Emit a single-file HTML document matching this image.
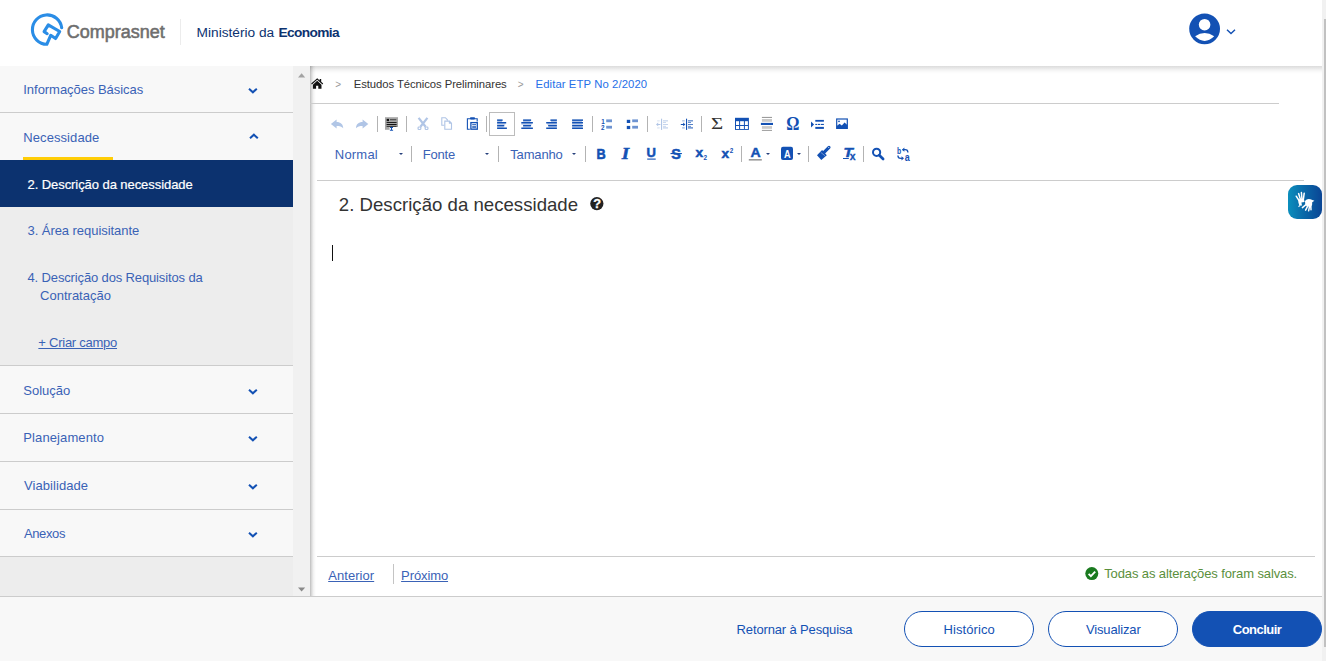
<!DOCTYPE html>
<html lang="pt-BR">
<head>
<meta charset="utf-8">
<title>Editar ETP No 2/2020 - Comprasnet</title>
<style>
html,body{margin:0;padding:0;}
body{width:1326px;height:661px;overflow:hidden;background:#fff;position:relative;font-family:"Liberation Sans",sans-serif;}
.abs{position:absolute;}
.t{position:absolute;white-space:pre;line-height:20px;font-family:"Liberation Sans",sans-serif;}
#lg{left:66.70px;top:22.03px;font-size:18px;font-weight:normal;color:#6e6e6e;letter-spacing:0.000px;-webkit-text-stroke:0.55px #6e6e6e;}
#mi1{left:196.60px;top:22.53px;font-size:13.7px;font-weight:normal;color:#0c326f;letter-spacing:0.000px;}
#mi2{left:278.44px;top:22.53px;font-size:13.7px;font-weight:bold;color:#0c326f;letter-spacing:-0.620px;}
#s1{left:23.30px;top:79.53px;font-size:13px;font-weight:normal;color:#3a62b6;letter-spacing:-0.039px;}
#s2{left:23.30px;top:127.53px;font-size:13px;font-weight:normal;color:#3a62b6;letter-spacing:0.077px;}
#s3{left:27.50px;top:174.53px;font-size:13px;font-weight:normal;color:#ffffff;letter-spacing:-0.067px;-webkit-text-stroke:0.2px #fff;}
#s4{left:27.50px;top:220.53px;font-size:13px;font-weight:normal;color:#3a62b6;letter-spacing:-0.055px;}
#s5{left:27.50px;top:267.53px;font-size:13px;font-weight:normal;color:#3a62b6;letter-spacing:-0.138px;}
#s6{left:40.10px;top:285.53px;font-size:13px;font-weight:normal;color:#3a62b6;letter-spacing:0.000px;}
#s7{left:38.36px;top:332.53px;font-size:13px;font-weight:normal;color:#3a62b6;letter-spacing:-0.257px;text-decoration:underline;}
#s8{left:23.30px;top:380.53px;font-size:13px;font-weight:normal;color:#3a62b6;letter-spacing:0.000px;}
#s9{left:23.30px;top:427.53px;font-size:13px;font-weight:normal;color:#3a62b6;letter-spacing:0.102px;}
#s10{left:24.00px;top:475.53px;font-size:13px;font-weight:normal;color:#3a62b6;letter-spacing:0.070px;}
#s11{left:24.00px;top:523.53px;font-size:13px;font-weight:normal;color:#3a62b6;letter-spacing:-0.392px;}
#b1{left:335.30px;top:74.53px;font-size:10px;font-weight:normal;color:#999;letter-spacing:0.000px;}
#b2{left:353.70px;top:74.03px;font-size:11.3px;font-weight:normal;color:#333;letter-spacing:-0.065px;}
#b3{left:517.80px;top:74.53px;font-size:10px;font-weight:normal;color:#999;letter-spacing:0.000px;}
#b4{left:535.56px;top:74.03px;font-size:11.3px;font-weight:normal;color:#2670e8;letter-spacing:0.096px;}
#c1{left:334.81px;top:144.53px;font-size:13px;font-weight:normal;color:#3a62b6;letter-spacing:0.210px;}
#c2{left:422.80px;top:144.53px;font-size:13px;font-weight:normal;color:#3a62b6;letter-spacing:-0.193px;}
#c3{left:510.20px;top:144.53px;font-size:13px;font-weight:normal;color:#3a62b6;letter-spacing:-0.140px;}
#ti{left:338.81px;top:194.53px;font-size:18.6px;font-weight:normal;color:#333;letter-spacing:0.019px;}
#n1{left:328.20px;top:565.53px;font-size:13px;font-weight:normal;color:#3a62b6;letter-spacing:0.060px;text-decoration:underline;}
#n2{left:401.10px;top:565.53px;font-size:13px;font-weight:normal;color:#3a62b6;letter-spacing:-0.105px;text-decoration:underline;}
#st{left:1104.20px;top:563.53px;font-size:13px;font-weight:normal;color:#5a8f3c;letter-spacing:-0.109px;}
#f1{left:736.60px;top:619.53px;font-size:13px;font-weight:normal;color:#1351b4;letter-spacing:-0.144px;}
#f2{left:943.47px;top:619.53px;font-size:13px;font-weight:normal;color:#1351b4;letter-spacing:0.087px;}
#f3{left:1085.90px;top:619.53px;font-size:13px;font-weight:normal;color:#1351b4;letter-spacing:-0.140px;}
#f4{left:1232.80px;top:619.53px;font-size:13px;font-weight:bold;color:#ffffff;letter-spacing:-0.520px;}
/* layout blocks */
#header{left:0;top:0;width:1322px;height:66px;background:#fff;}
#hdiv{left:180px;top:19px;width:1px;height:26px;background:#ececec;}
#side{left:0;top:66px;width:293px;height:530px;background:#f8f8f8;}
.sb{position:absolute;left:0;width:293px;height:1px;background:#cccccc;}
#items{left:0;top:207px;width:293px;height:158px;background:#ededed;}
#active{left:0;top:160px;width:293px;height:47px;background:#0c326f;}
#yellow{left:23px;top:157px;width:90px;height:3px;background:#ffcd07;}
#filler{left:0;top:557px;width:293px;height:39px;background:#ededed;}
#sscroll{left:293px;top:66px;width:17px;height:530px;background:#f1f1f1;}
#main{left:310px;top:66px;width:1012px;height:530px;background:#fff;}
#shtop{left:310px;top:66px;width:1012px;height:8px;background:linear-gradient(to bottom,rgba(0,0,0,.137) 0,rgba(0,0,0,.098) 25%,rgba(0,0,0,.047) 50%,rgba(0,0,0,.016) 75%,rgba(0,0,0,0) 100%);}
#shleft{left:310px;top:66px;width:6px;height:530px;background:linear-gradient(to right,rgba(0,0,0,.224) 0,rgba(0,0,0,.224) 8%,rgba(0,0,0,.153) 25%,rgba(0,0,0,.098) 42%,rgba(0,0,0,.051) 58%,rgba(0,0,0,.027) 75%,rgba(0,0,0,.008) 92%,rgba(0,0,0,0) 100%);}
.hr{position:absolute;height:1px;background:#cccccc;}
#footer{left:0;top:596px;width:1322px;height:65px;background:#f8f8f8;border-top:1px solid #cccccc;box-sizing:border-box;}
.btn{position:absolute;top:611px;width:130px;height:36px;border-radius:18px;box-sizing:border-box;border:1px solid #1351b4;background:#fff;}
#bt3{background:#1351b4;}
#rtrack{left:1322px;top:0;width:4px;height:661px;background:#f1f1f1;}
#rthumb{left:1324px;top:19px;width:2px;height:628px;background:#c1c1c1;}
.sep{position:absolute;width:1px;height:16px;background:#b3b3b3;}
.ic{position:absolute;width:16px;height:16px;overflow:visible;}
.dis{opacity:.33;}
#albox{left:489px;top:112px;width:26px;height:24px;box-sizing:border-box;border:1px solid #bcbcbc;background:#fff;}
.arr{position:absolute;width:0;height:0;border-left:2.5px solid transparent;border-right:2.5px solid transparent;border-top:2.5px solid #27407c;}
#cursor{left:332px;top:245px;width:1px;height:16px;background:#111;}
#vlibras{left:1288px;top:185px;width:34px;height:34px;border-radius:9px;background:linear-gradient(to right,#0b8fbd 0,#0a6aa9 45%,#0a4595 100%);}
.g{position:absolute;white-space:pre;font-family:"Liberation Sans",sans-serif;color:#1351b4;line-height:16px;}
</style>
</head>
<body>
<div class="abs" id="header"></div>
<div class="abs" id="hdiv"></div>
<div class="abs" id="side"></div>
<div class="abs" id="items"></div>
<div class="abs" id="filler"></div>
<div class="abs" id="active"></div>
<div class="abs" id="yellow"></div>
<div class="sb" style="top:112px"></div>
<div class="sb" style="top:365px"></div>
<div class="sb" style="top:413px"></div>
<div class="sb" style="top:461px"></div>
<div class="sb" style="top:509px"></div>
<div class="sb" style="top:556px"></div>
<div class="abs" id="sscroll"></div>
<div class="abs" id="main"></div>
<div class="abs" id="shtop"></div>
<div class="abs" id="shleft"></div>
<div class="hr" style="left:310px;top:103px;width:969px"></div>
<div class="hr" style="left:317px;top:180px;width:987px"></div>
<div class="hr" style="left:317px;top:556px;width:998px"></div>
<div class="abs" style="left:393px;top:564px;width:1px;height:20px;background:#c4c4c4"></div>
<div class="abs" id="footer"></div>
<div class="btn" id="bt1" style="left:904px"></div>
<div class="btn" id="bt2" style="left:1048px"></div>
<div class="btn" id="bt3" style="left:1192px"></div>
<div class="abs" id="rtrack"></div>
<div class="abs" id="rthumb"></div>
<div class="abs" id="albox"></div>
<div class="abs" id="cursor"></div>
<div class="abs" id="vlibras"></div>
<div class="sep" style="left:377px;top:116px"></div>
<div class="sep" style="left:406px;top:116px"></div>
<div class="sep" style="left:486px;top:116px"></div>
<div class="sep" style="left:592px;top:116px"></div>
<div class="sep" style="left:647px;top:116px"></div>
<div class="sep" style="left:701px;top:116px"></div>
<div class="sep" style="left:411px;top:146px"></div>
<div class="sep" style="left:498px;top:146px"></div>
<div class="sep" style="left:585px;top:146px"></div>
<div class="sep" style="left:741px;top:146px"></div>
<div class="sep" style="left:808px;top:146px"></div>
<div class="sep" style="left:863px;top:146px"></div>
<svg class="ic dis" style="left:329px;top:116px;width:16px;height:16px" viewBox="0 0 16 16"><path d="M1.9 8 L7.6 3.4 V6 C11.6 6 14.2 8.4 14.2 12.3 C12.8 10.4 10.6 9.9 7.6 9.9 V12.5 Z" fill="#1351b4"/></svg>
<svg class="ic dis" style="left:354px;top:116px;width:16px;height:16px" viewBox="0 0 16 16"><g transform="translate(16.2,0) scale(-1,1)"><path d="M1.9 8 L7.6 3.4 V6 C11.6 6 14.2 8.4 14.2 12.3 C12.8 10.4 10.6 9.9 7.6 9.9 V12.5 Z" fill="#1351b4"/></g></svg>
<svg class="ic " style="left:384px;top:116px;width:16px;height:16px" viewBox="0 0 16 16"><rect x="1" y="1.2" width="13" height="9.8" fill="#a6a6a6"/><rect x="1" y="10.9" width="4.6" height="2.9" fill="#a6a6a6"/><rect x="2.7" y="2.9" width="2.3" height="2.2" fill="#111"/><rect x="6" y="3" width="6.3" height="1.3" fill="#555"/><rect x="2.6" y="6" width="10" height="0.9" fill="#111"/><rect x="2.6" y="8" width="10" height="1.1" fill="#111"/><rect x="2.6" y="10.1" width="10" height="0.9" fill="#333"/><path d="M6 11 h3 v0.9 h-1 v1.9 h1.1 v1 h-3.2 v-1 h1.1 v-1.9 h-1z" fill="#1351b4"/></svg>
<svg class="ic dis" style="left:414px;top:116px;width:16px;height:16px" viewBox="0 0 16 16"><path d="M4.6 1.9 L11.6 10.8 M13.4 1.9 L6.4 10.8" stroke="#1351b4" stroke-width="2.2" fill="none"/><rect x="4.1" y="11" width="2.7" height="2.5" rx="0.8" fill="none" stroke="#1351b4" stroke-width="1.2"/><rect x="11.2" y="11" width="2.7" height="2.5" rx="0.8" fill="none" stroke="#1351b4" stroke-width="1.2"/></svg>
<svg class="ic dis" style="left:439px;top:116px;width:16px;height:16px" viewBox="0 0 16 16"><path d="M5.3 9.3 H2.8 V1.7 H6.4 L8.4 3.8 V4.8" fill="none" stroke="#1351b4" stroke-width="1.1"/><path d="M5.8 5.1 H10.4 L12.5 7.3 V13.3 H5.8 Z M10.4 5.1 V7.3 H12.5" fill="none" stroke="#1351b4" stroke-width="1.1"/></svg>
<svg class="ic " style="left:464px;top:116px;width:16px;height:16px" viewBox="0 0 16 16"><path d="M5.8 13.2 H3.4 V2.8 H13.2 V5.6" fill="none" stroke="#1351b4" stroke-width="1.1"/><rect x="6" y="1.2" width="5" height="2.2" rx="0.8" fill="#1351b4"/><rect x="6.9" y="6.6" width="6.4" height="6.6" fill="none" stroke="#1351b4" stroke-width="1.3"/><rect x="8.2" y="8.2" width="3.8" height="1" fill="#1351b4"/><rect x="8.2" y="10" width="3.8" height="2.2" fill="#1351b4" opacity="0.75"/></svg>
<svg class="ic " style="left:494px;top:116px;width:16px;height:16px" viewBox="0 0 16 16"><rect x="3.1" y="3.4" width="5.5" height="1.5" fill="#1351b4" opacity="1"/><rect x="3.1" y="6.0" width="9.1" height="1.5" fill="#1351b4" opacity="1"/><rect x="3.1" y="8.9" width="7.2" height="1.5" fill="#1351b4" opacity="1"/><rect x="3.1" y="11.5" width="9.8" height="1.5" fill="#1351b4" opacity="1"/><rect x="3.1" y="4.9" width="4.95" height="1.1" fill="#1351b4" opacity="0.35"/><rect x="3.1" y="7.5" width="8.19" height="1.1" fill="#1351b4" opacity="0.35"/><rect x="3.1" y="10.4" width="6.48" height="1.1" fill="#1351b4" opacity="0.35"/></svg>
<svg class="ic " style="left:519px;top:116px;width:16px;height:16px" viewBox="0 0 16 16"><rect x="4.1" y="3.4" width="8" height="1.5" fill="#1351b4" opacity="1"/><rect x="2.3" y="6.0" width="11.6" height="1.5" fill="#1351b4" opacity="1"/><rect x="4.1" y="8.9" width="8" height="1.5" fill="#1351b4" opacity="1"/><rect x="2.3" y="11.5" width="11.6" height="1.5" fill="#1351b4" opacity="1"/><rect x="4.1" y="4.9" width="7.2" height="1.1" fill="#1351b4" opacity="0.35"/><rect x="2.3" y="7.5" width="10.44" height="1.1" fill="#1351b4" opacity="0.35"/><rect x="4.1" y="10.4" width="7.2" height="1.1" fill="#1351b4" opacity="0.35"/></svg>
<svg class="ic " style="left:544px;top:116px;width:16px;height:16px" viewBox="0 0 16 16"><rect x="6.4" y="3.4" width="6.5" height="1.5" fill="#1351b4" opacity="1"/><rect x="2.2" y="6.0" width="10.7" height="1.5" fill="#1351b4" opacity="1"/><rect x="4.1" y="8.9" width="8.8" height="1.5" fill="#1351b4" opacity="1"/><rect x="2.2" y="11.5" width="10.7" height="1.5" fill="#1351b4" opacity="1"/><rect x="7.05" y="4.9" width="5.8500000000000005" height="1.1" fill="#1351b4" opacity="0.35"/><rect x="3.2700000000000014" y="7.5" width="9.629999999999999" height="1.1" fill="#1351b4" opacity="0.35"/><rect x="4.9799999999999995" y="10.4" width="7.920000000000001" height="1.1" fill="#1351b4" opacity="0.35"/></svg>
<svg class="ic " style="left:569px;top:116px;width:16px;height:16px" viewBox="0 0 16 16"><rect x="3.1" y="3.4" width="10.9" height="1.5" fill="#1351b4" opacity="1"/><rect x="3.1" y="6.0" width="10.9" height="1.5" fill="#1351b4" opacity="1"/><rect x="3.1" y="8.9" width="10.9" height="1.5" fill="#1351b4" opacity="1"/><rect x="3.1" y="11.5" width="10.9" height="1.5" fill="#1351b4" opacity="1"/><rect x="3.1" y="4.9" width="9.81" height="1.1" fill="#1351b4" opacity="0.35"/><rect x="3.1" y="7.5" width="9.81" height="1.1" fill="#1351b4" opacity="0.35"/><rect x="3.1" y="10.4" width="9.81" height="1.1" fill="#1351b4" opacity="0.35"/></svg>
<svg class="ic " style="left:599px;top:116px;width:16px;height:16px" viewBox="0 0 16 16"><text x="2.2" y="7.9" font-family="Liberation Sans, sans-serif" font-weight="bold" font-size="6.3" fill="#1351b4">1</text><text x="2.0" y="14.1" font-family="Liberation Sans, sans-serif" font-weight="bold" font-size="6.3" fill="#1351b4">2</text><rect x="7.2" y="3.4" width="5.8" height="2.8" fill="#1351b4" opacity="0.62"/><rect x="7.2" y="9.8" width="5.8" height="2.8" fill="#1351b4" opacity="0.62"/></svg>
<svg class="ic " style="left:624px;top:116px;width:16px;height:16px" viewBox="0 0 16 16"><rect x="2.8" y="3.8" width="3.4" height="3.2" fill="#1351b4" opacity="1"/><rect x="2.8" y="9.9" width="3.4" height="3.2" fill="#1351b4" opacity="1"/><rect x="8.2" y="3.4" width="5.8" height="2.8" fill="#1351b4" opacity="0.62"/><rect x="8.2" y="9.8" width="5.8" height="2.8" fill="#1351b4" opacity="0.62"/></svg>
<svg class="ic dis" style="left:654px;top:116px;width:16px;height:16px" viewBox="0 0 16 16"><rect x="7" y="2.7" width="1.1" height="11.2" fill="#1351b4"/><rect x="9" y="4.3" width="5" height="1.1" fill="#1351b4" opacity="0.8"/><rect x="9" y="6.2" width="3" height="0.8" fill="#1351b4" opacity="0.8"/><rect x="9" y="8" width="5" height="0.9" fill="#1351b4" opacity="0.8"/><rect x="9" y="9.9" width="3" height="0.8" fill="#1351b4" opacity="0.8"/><rect x="9" y="11.3" width="5" height="1.2" fill="#1351b4" opacity="0.8"/><rect x="3.2" y="4.3" width="2.5" height="1.1" fill="#1351b4" opacity="0.45"/><rect x="3.2" y="11.3" width="2.5" height="1.2" fill="#1351b4" opacity="0.45"/><path d="M2 8.45 L4.2 6.6 V7.95 H6.4 V8.95 H4.2 V10.3 Z" fill="#1351b4"/></svg>
<svg class="ic " style="left:679px;top:116px;width:16px;height:16px" viewBox="0 0 16 16"><rect x="7" y="2.7" width="1.1" height="11.2" fill="#1351b4"/><rect x="9" y="4.3" width="5" height="1.1" fill="#1351b4" opacity="0.8"/><rect x="9" y="6.2" width="3" height="0.8" fill="#1351b4" opacity="0.8"/><rect x="9" y="8" width="5" height="0.9" fill="#1351b4" opacity="0.8"/><rect x="9" y="9.9" width="3" height="0.8" fill="#1351b4" opacity="0.8"/><rect x="9" y="11.3" width="5" height="1.2" fill="#1351b4" opacity="0.8"/><rect x="3.2" y="4.3" width="2.5" height="1.1" fill="#1351b4" opacity="0.45"/><rect x="3.2" y="11.3" width="2.5" height="1.2" fill="#1351b4" opacity="0.45"/><path d="M6.4 8.45 L4.2 6.6 V7.95 H1.8 V8.95 H4.2 V10.3 Z" fill="#1351b4"/></svg>
<svg class="ic " style="left:709px;top:116px;width:16px;height:16px" viewBox="0 0 16 16"><text x="2.0" y="13.4" font-family="Liberation Serif, serif" font-size="17" fill="#333" textLength="12.2" lengthAdjust="spacingAndGlyphs">Σ</text></svg>
<svg class="ic " style="left:734px;top:116px;width:16px;height:16px" viewBox="0 0 16 16"><rect x="1" y="1.8" width="13.9" height="12.1" fill="#1351b4"/><rect x="2" y="5.2" width="3.1" height="3.8" fill="#fff" opacity="1"/><rect x="6.1" y="5.2" width="3.8" height="3.8" fill="#fff" opacity="1"/><rect x="10.9" y="5.2" width="3" height="3.8" fill="#fff" opacity="1"/><rect x="2" y="10" width="3.1" height="3" fill="#fff" opacity="1"/><rect x="6.1" y="10" width="3.8" height="3" fill="#fff" opacity="1"/><rect x="10.9" y="10" width="3" height="3" fill="#fff" opacity="1"/></svg>
<svg class="ic " style="left:759px;top:116px;width:16px;height:16px" viewBox="0 0 16 16"><rect x="2.9" y="0.9" width="10.1" height="1.1" fill="#9c9c9c" opacity="1"/><rect x="2.9" y="13.9" width="10.1" height="1.0" fill="#9c9c9c" opacity="1"/><rect x="2.9" y="3" width="10.1" height="2.8" fill="#c9c9c9" opacity="1"/><rect x="2.9" y="10.1" width="10.1" height="2.7" fill="#c9c9c9" opacity="1"/><rect x="1.9" y="6.9" width="12.1" height="2.1" fill="#1351b4" opacity="1"/></svg>
<svg class="ic " style="left:784px;top:116px;width:16px;height:16px" viewBox="0 0 16 16"><text x="2.2" y="13.5" font-family="Liberation Serif, serif" font-weight="bold" font-size="18" fill="#1351b4" textLength="13.2" lengthAdjust="spacingAndGlyphs">Ω</text></svg>
<svg class="ic " style="left:809px;top:116px;width:16px;height:16px" viewBox="0 0 16 16"><path d="M2 5.4 L5.1 8.5 L2 11.6 Z" fill="#1351b4"/><rect x="6.3" y="3.9" width="8.6" height="1.8" fill="#1351b4" opacity="1"/><rect x="6.3" y="10.9" width="8.6" height="2" fill="#1351b4" opacity="1"/><rect x="6.3" y="7.9" width="2" height="1.1" fill="#1351b4" opacity="1"/><rect x="9" y="7.9" width="2" height="1.1" fill="#1351b4" opacity="1"/><rect x="11.7" y="7.9" width="3.2" height="1.1" fill="#1351b4" opacity="1"/></svg>
<svg class="ic " style="left:834px;top:116px;width:16px;height:16px" viewBox="0 0 16 16"><rect x="2.7" y="3" width="10.6" height="9.4" fill="#fff" stroke="#1351b4" stroke-width="1.2"/><path d="M2.7 12.4 V10 L5.6 7.8 L7.8 9.6 L10.6 6.6 L13.3 9 V12.4 Z" fill="#1351b4"/><circle cx="5" cy="5.3" r="0.9" fill="#1351b4"/></svg>
<svg class="ic " style="left:593px;top:146px;width:16px;height:16px" viewBox="0 0 16 16"><text x="3.6" y="12.9" font-family="Liberation Sans, sans-serif" font-weight="bold" font-size="15.4" fill="#1351b4" textLength="9.2" stroke="#1351b4" stroke-width="0.6" lengthAdjust="spacingAndGlyphs">B</text></svg>
<svg class="ic " style="left:618px;top:146px;width:16px;height:16px" viewBox="0 0 16 16"><text x="3.8" y="12.9" font-family="Liberation Serif, serif" font-weight="bold" font-style="italic" font-size="16.6" fill="#1351b4" textLength="7.4" stroke="#1351b4" stroke-width="0.5" lengthAdjust="spacingAndGlyphs">I</text></svg>
<svg class="ic " style="left:643px;top:146px;width:16px;height:16px" viewBox="0 0 16 16"><text x="3.6" y="10.9" font-family="Liberation Sans, sans-serif" font-weight="bold" font-size="12.8" fill="#1351b4" textLength="9.4" stroke="#1351b4" stroke-width="0.5" lengthAdjust="spacingAndGlyphs">U</text><rect x="4.2" y="12.55" width="8.5" height="1.1" fill="#1351b4"/></svg>
<svg class="ic " style="left:668px;top:146px;width:16px;height:16px" viewBox="0 0 16 16"><text x="3.3" y="12.9" font-family="Liberation Sans, sans-serif" font-weight="bold" font-size="15.4" fill="#1351b4" textLength="9.6" stroke="#1351b4" stroke-width="0.5" lengthAdjust="spacingAndGlyphs">S</text><rect x="2.5" y="7" width="11.4" height="1.1" fill="#1351b4"/></svg>
<svg class="ic " style="left:693px;top:146px;width:16px;height:16px" viewBox="0 0 16 16"><text x="2.6" y="10.9" font-family="Liberation Sans, sans-serif" font-weight="bold" font-size="13.6" fill="#1351b4" stroke="#1351b4" stroke-width="0.5" textLength="7.6" lengthAdjust="spacingAndGlyphs">x</text><text x="10.4" y="13.5" font-family="Liberation Sans, sans-serif" font-weight="bold" font-size="6.4" fill="#1351b4">2</text></svg>
<svg class="ic " style="left:718px;top:146px;width:16px;height:16px" viewBox="0 0 16 16"><text x="3.5" y="12.1" font-family="Liberation Sans, sans-serif" font-weight="bold" font-size="13.6" fill="#1351b4" stroke="#1351b4" stroke-width="0.5" textLength="7.6" lengthAdjust="spacingAndGlyphs">x</text><text x="11.7" y="6.6" font-family="Liberation Sans, sans-serif" font-weight="bold" font-size="6.4" fill="#1351b4">2</text></svg>
<svg class="ic " style="left:747px;top:146px;width:16px;height:16px" viewBox="0 0 16 16"><text x="3.5" y="11" font-family="Liberation Sans, sans-serif" font-weight="bold" font-size="12.6" fill="#1351b4" stroke="#1351b4" stroke-width="0.4" textLength="10.2" lengthAdjust="spacingAndGlyphs">A</text><rect x="1.8" y="13" width="13" height="1.6" fill="#9a9a9a"/></svg>
<svg class="ic " style="left:779px;top:146px;width:16px;height:16px" viewBox="0 0 16 16"><rect x="2" y="0.8" width="12" height="13.3" rx="2" fill="#1351b4"/><text x="4.9" y="12.2" font-family="Liberation Sans, sans-serif" font-weight="bold" font-size="11.6" fill="#fff" textLength="6.6" lengthAdjust="spacingAndGlyphs">A</text></svg>
<svg class="ic " style="left:815px;top:146px;width:16px;height:16px" viewBox="0 0 16 16"><path d="M14 1.3 L9 6.3" stroke="#1351b4" stroke-width="3.1" stroke-linecap="round"/><path d="M7.1 3.9 L11.8 9.2 L6.3 13.9 L2 9.2 Z" fill="#1351b4"/><circle cx="13.7" cy="1.5" r="0.6" fill="#fff" opacity="0.8"/><path d="M5.7 6.3 L10 9.8" stroke="#fff" stroke-width="0.6" opacity="0.65"/></svg>
<svg class="ic " style="left:840px;top:146px;width:16px;height:16px" viewBox="0 0 16 16"><text x="3.4" y="10.8" font-family="Liberation Sans, sans-serif" font-weight="bold" font-style="italic" font-size="12.2" fill="#1351b4" stroke="#1351b4" stroke-width="0.5" textLength="9.4" lengthAdjust="spacingAndGlyphs">T</text><rect x="3" y="12" width="5.8" height="1" fill="#1351b4"/><text x="9.7" y="14.4" font-family="Liberation Sans, sans-serif" font-weight="bold" font-size="11" fill="#1351b4" stroke="#1351b4" stroke-width="0.3" textLength="5.8" lengthAdjust="spacingAndGlyphs">x</text></svg>
<svg class="ic " style="left:870px;top:146px;width:16px;height:16px" viewBox="0 0 16 16"><circle cx="6.6" cy="6.3" r="3.6" fill="none" stroke="#1351b4" stroke-width="2"/><path d="M9.3 9.2 L13.1 13.0" stroke="#1351b4" stroke-width="2.7" stroke-linecap="round"/></svg>
<svg class="ic " style="left:895px;top:146px;width:16px;height:16px" viewBox="0 0 16 16"><text x="2" y="7.6" font-family="Liberation Sans, sans-serif" font-weight="bold" font-size="9.6" fill="#1351b4" textLength="4.2" lengthAdjust="spacingAndGlyphs">b</text><text x="9.8" y="14.5" font-family="Liberation Sans, sans-serif" font-weight="bold" font-size="10.6" fill="#1351b4" textLength="5" lengthAdjust="spacingAndGlyphs">a</text><path d="M7.6 3.7 H10.2 C12 3.7 12.9 4.6 12.9 6.4" fill="none" stroke="#1351b4" stroke-width="1.3"/><path d="M9.4 1.6 L6.9 3.7 L9.4 5.8 Z" fill="#1351b4"/><path d="M2.9 9.4 C2.9 11.4 3.9 12.3 5.8 12.3 H7.4" fill="none" stroke="#1351b4" stroke-width="1.3"/><path d="M6.5 10.2 L9 12.3 L6.5 14.4 Z" fill="#1351b4"/></svg>
<div class="arr" style="left:398.6px;top:153px"></div>
<div class="arr" style="left:485.3px;top:153px"></div>
<div class="arr" style="left:572.3px;top:153px"></div>
<div class="arr" style="left:765.9px;top:153px"></div>
<div class="arr" style="left:797.3px;top:153px"></div>
<svg class="abs" style="left:248.0px;top:87px;width:9.8px;height:7px;overflow:visible" viewBox="0 0 9.8 6"><path d="M1 1.2 L4.9 4.8 L8.8 1.2" fill="none" stroke="#1351b4" stroke-width="2"/></svg>
<svg class="abs" style="left:248.9px;top:133.4px;width:9.8px;height:7px;overflow:visible" viewBox="0 0 9.8 6"><path d="M1 4.8 L4.9 1.2 L8.8 4.8" fill="none" stroke="#1351b4" stroke-width="2"/></svg>
<svg class="abs" style="left:248.0px;top:388px;width:9.8px;height:7px;overflow:visible" viewBox="0 0 9.8 6"><path d="M1 1.2 L4.9 4.8 L8.8 1.2" fill="none" stroke="#1351b4" stroke-width="2"/></svg>
<svg class="abs" style="left:248.0px;top:435px;width:9.8px;height:7px;overflow:visible" viewBox="0 0 9.8 6"><path d="M1 1.2 L4.9 4.8 L8.8 1.2" fill="none" stroke="#1351b4" stroke-width="2"/></svg>
<svg class="abs" style="left:248.0px;top:483px;width:9.8px;height:7px;overflow:visible" viewBox="0 0 9.8 6"><path d="M1 1.2 L4.9 4.8 L8.8 1.2" fill="none" stroke="#1351b4" stroke-width="2"/></svg>
<svg class="abs" style="left:248.0px;top:531px;width:9.8px;height:7px;overflow:visible" viewBox="0 0 9.8 6"><path d="M1 1.2 L4.9 4.8 L8.8 1.2" fill="none" stroke="#1351b4" stroke-width="2"/></svg>
<svg class="abs" style="left:1226.3px;top:27.6px;width:10.0px;height:7.2px;overflow:visible" viewBox="0 0 10.0 6.2"><path d="M1 1.2 L5.0 5.0 L9.0 1.2" fill="none" stroke="#1351b4" stroke-width="1.4"/></svg>
<svg class="abs" style="left:298px;top:72.6px;width:8px;height:5px" viewBox="0 0 8 5"><path d="M0 4.4 L3.6 0.2 L7.2 4.4 Z" fill="#a3a3a3"/></svg><svg class="abs" style="left:298px;top:586.5px;width:8px;height:5px" viewBox="0 0 8 5"><path d="M0 0.4 L3.6 4.6 L7.2 0.4 Z" fill="#8a8a8a"/></svg>
<svg class="abs" style="left:311.2px;top:78.1px;width:12.4px;height:11.2px" viewBox="0 0 12.4 10.6" preserveAspectRatio="none"><path d="M6.2 0.2 L0.2 5.3 L0.9 6.1 L6.2 1.7 L11.5 6.1 L12.2 5.3 L10.2 3.6 V0.9 H8.7 V2.3 Z" fill="#111"/><path d="M6.2 2.7 L1.9 6.3 V10.3 H5.1 V7.4 H7.3 V10.3 H10.5 V6.3 Z" fill="#111"/></svg>
<svg class="abs" style="left:28px;top:10px;width:40px;height:40px" viewBox="28 10 40 40"><path d="M61.7 27.8 A14.7 14.7 0 1 0 46.8 44.3 L50.7 35.3 L55.6 38.5 L59.7 31.5 L48.3 24.9 L44.1 31.6 L47.2 33.7" fill="none" stroke="#2a8de6" stroke-width="3.1" stroke-linecap="round" stroke-linejoin="round"/></svg>
<svg class="abs" style="left:1189px;top:13px;width:32px;height:32px" viewBox="1189 13 32 32"><circle cx="1204.6" cy="28.8" r="15.4" fill="#1351b4"/><circle cx="1204.6" cy="24.7" r="5.8" fill="#fff"/><path d="M1195.1 36.3 Q1204.6 29.6 1214.2 36.3 Q1204.6 45.6 1195.1 36.3 Z" fill="#fff"/></svg>
<svg class="abs" style="left:590px;top:197px;width:14px;height:14px" viewBox="0 0 14 14"><circle cx="6.85" cy="6.6" r="6.6" fill="#222"/><text x="3.2" y="11.2" font-family="Liberation Sans, sans-serif" font-weight="bold" font-size="12.8" fill="#fff" stroke="#fff" stroke-width="0.3">?</text></svg>
<svg class="abs" style="left:1085px;top:567px;width:14px;height:14px" viewBox="0 0 14 14"><circle cx="6.8" cy="6.6" r="6.5" fill="#1a7a1f"/><path d="M3.6 6.8 L5.9 9.1 L10.2 4.7" fill="none" stroke="#fff" stroke-width="1.9"/></svg>
<svg class="abs" style="left:1288px;top:185px;width:34px;height:34px" viewBox="0 0 34 34"><g fill="none" stroke="#fff" stroke-linecap="round"><path d="M8.2 11.2 L11 15.5 M10.6 8.6 L12.4 14.3 M13.4 7.6 L13.9 13.8 M16.2 8.2 L15.4 14.2" stroke-width="1.5"/><path d="M17.6 25.2 L20 20.6 M20.6 25.8 L21.6 21.2 M23 24.8 L22.8 20.6 M14.4 22.6 L18 19.6" stroke-width="1.5"/></g><path d="M10.2 14.4 L15.8 13.6 L16.6 17 L13.4 17.4 L14 20.4 L11.4 20.8 L10.4 17.6 Z" fill="#fff"/><path d="M17 16 Q19 13.2 22.4 14.2 L26.4 15.8 L24.2 17.2 Q24.6 20.6 23 21.4 L18.6 21.2 Q16.6 19.4 17 16 Z" fill="#fff"/><path d="M10 21.2 L11.6 20 L12.4 21 L10.8 22.2 Z" fill="#fff" opacity="0.8"/></svg>
<span class="t" id="lg">Comprasnet</span>
<span class="t" id="mi1">Ministério da</span>
<span class="t" id="mi2">Economia</span>
<span class="t" id="s1">Informações Básicas</span>
<span class="t" id="s2">Necessidade</span>
<span class="t" id="s3">2. Descrição da necessidade</span>
<span class="t" id="s4">3. Área requisitante</span>
<span class="t" id="s5">4. Descrição dos Requisitos da</span>
<span class="t" id="s6">Contratação</span>
<span class="t" id="s7">+ Criar campo</span>
<span class="t" id="s8">Solução</span>
<span class="t" id="s9">Planejamento</span>
<span class="t" id="s10">Viabilidade</span>
<span class="t" id="s11">Anexos</span>
<span class="t" id="b1">&gt;</span>
<span class="t" id="b2">Estudos Técnicos Preliminares</span>
<span class="t" id="b3">&gt;</span>
<span class="t" id="b4">Editar ETP No 2/2020</span>
<span class="t" id="c1">Normal</span>
<span class="t" id="c2">Fonte</span>
<span class="t" id="c3">Tamanho</span>
<span class="t" id="ti">2. Descrição da necessidade</span>
<span class="t" id="n1">Anterior</span>
<span class="t" id="n2">Próximo</span>
<span class="t" id="st">Todas as alterações foram salvas.</span>
<span class="t" id="f1">Retornar à Pesquisa</span>
<span class="t" id="f2">Histórico</span>
<span class="t" id="f3">Visualizar</span>
<span class="t" id="f4">Concluir</span>
</body>
</html>
